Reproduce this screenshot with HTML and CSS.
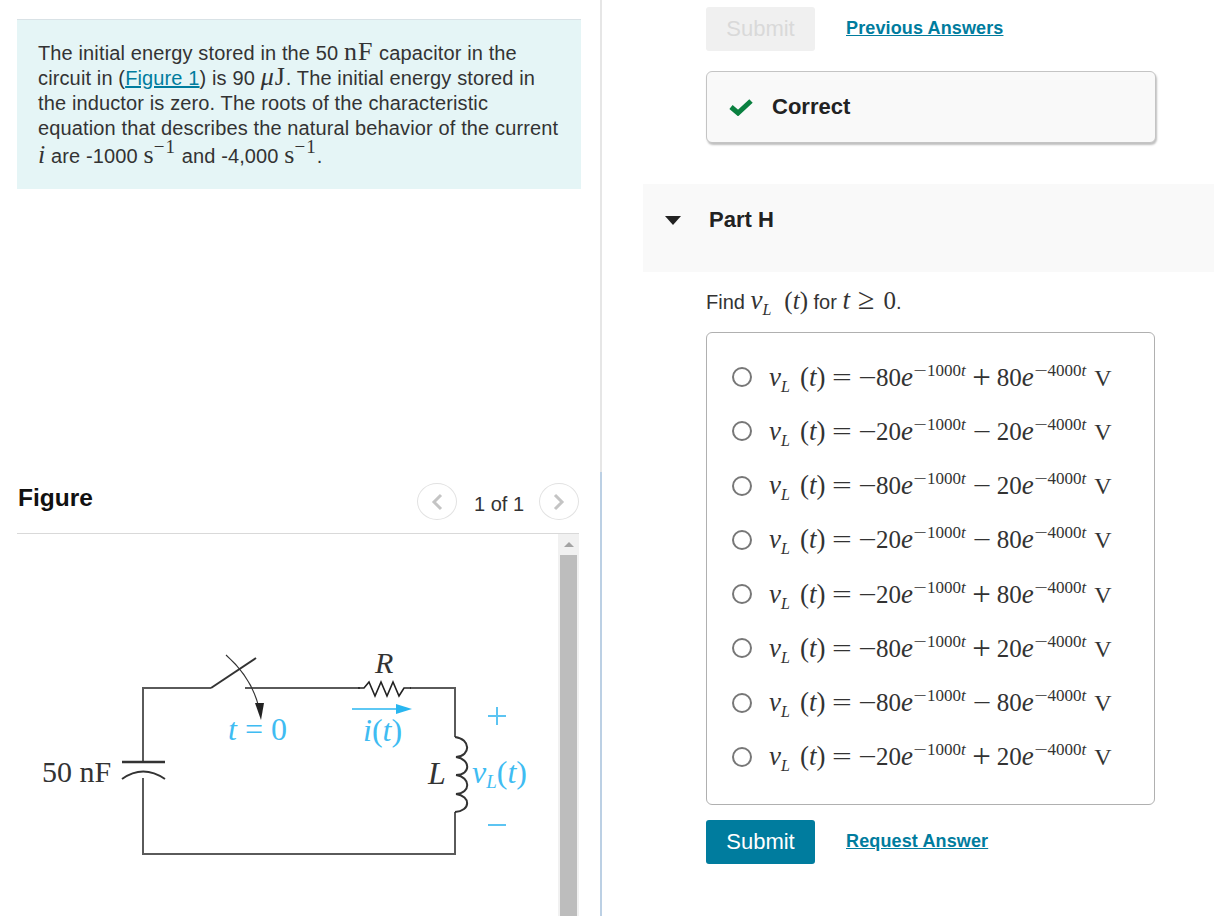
FILE: index.html
```html
<!DOCTYPE html>
<html lang="en">
<head>
    <meta charset="UTF-8">
    <title>Part H</title>
    <link rel="stylesheet" href="styles.css">
</head>
<body>
    <div class="page">
        <!-- left column -->
        <div class="left">
            <div class="intro">
                <p>The initial energy stored in the 50 <span class="m unit-wide">nF</span> capacitor in the circuit in (<a href="#">Figure 1</a>) is 90 <span class="m unit-wide"><i>μ</i>J</span>. The initial energy stored in the inductor is zero. The roots of the characteristic equation that describes the natural behavior of the current <span class="last-line"><span class="m"><i>i</i></span> are -1000 <span class="m">s<sup>−1</sup></span> and -4,000 <span class="m">s<sup>−1</sup></span>.</span></p>
            </div>

            <div class="figure-head">
                <h2>Figure</h2>
                <div class="pager">
                    <span class="pager-btn">
                        <svg width="12" height="18" viewBox="0 0 12 18"><path d="M10 2 L3 9 L10 16" fill="none" stroke="#c4c4c4" stroke-width="3"/></svg>
                    </span>
                    <span class="pager-text">1 of 1</span>
                    <span class="pager-btn">
                        <svg width="12" height="18" viewBox="0 0 12 18"><path d="M2 2 L9 9 L2 16" fill="none" stroke="#c4c4c4" stroke-width="3"/></svg>
                    </span>
                </div>
            </div>

            <div class="figure-body">
                <svg class="circuit" width="541" height="382" viewBox="17 534 541 382">
                    <g fill="none" stroke="#5a5a5a" stroke-width="2">
                        <path d="M143 778 V854 H455 V812"/>
                        <path d="M143 762 V688 H211"/>
                        <path d="M245 688 H360"/>
                        <path d="M410 688 H455 V737"/>
                    </g>
                    <path d="M211 688 L256 658" fill="none" stroke="#333" stroke-width="2"/>
                    <path d="M358 688 L364 688 L369 682 L375 696 L381 682 L387 696 L393 682 L399 696 L404 688 L411 688" fill="none" stroke="#222" stroke-width="1.6"/>
                    <path d="M226 655 Q252 678 259 708" fill="none" stroke="#333" stroke-width="1.2"/>
                    <path d="M255 703 L264 703 L261 720 Z" fill="#222"/>
                    <path d="M122 762 H165" stroke="#333" stroke-width="2.5"/>
                    <path d="M122 779 Q143 764 165 779" fill="none" stroke="#333" stroke-width="2"/>
                    <path d="M455 737 C471 739 471 756 456 757 C471 759 471 775 456 775 C471 777 471 793 456 794 C471 796 471 811 455 812" fill="none" stroke="#333" stroke-width="2"/>
                    <path d="M352 709 H396" stroke="#29b6f0" stroke-width="1.6"/>
                    <path d="M396 704 L412 709 L396 714 Z" fill="#29b6f0"/>
                    <path d="M497 707 V725 M488 716 H506 M488 825 H506" stroke="#5cc4f2" stroke-width="2"/>
                    <g class="fig-text">
                        <text x="42" y="782" font-size="30" class="dark">50 nF</text>
                        <text x="375" y="673" font-size="30" class="dark it">R</text>
                        <text x="428" y="784" font-size="32" class="dark it">L</text>
                        <text x="228" y="740" font-size="32" class="blue"><tspan class="it">t</tspan> = 0</text>
                        <text x="363" y="741" font-size="32" class="blue"><tspan class="it">i</tspan>(<tspan class="it">t</tspan>)</text>
                        <text x="472" y="783" font-size="32" class="blue"><tspan class="it">v</tspan><tspan class="it" font-size="19" dy="5">L</tspan><tspan dy="-5">(</tspan><tspan class="it">t</tspan>)</text>
                    </g>
                </svg>
                <div class="scrollbar">
                    <span class="scroll-up"></span>
                    <div class="scroll-thumb"></div>
                </div>
            </div>
        </div>

        <div class="divider"></div>

        <!-- right column -->
        <div class="right">
            <div class="actions top-actions">
                <button class="btn btn-off" type="button">Submit</button>
                <a class="link" href="#">Previous Answers</a>
            </div>

            <div class="correct">
                <svg width="24" height="18" viewBox="0 0 24 18"><path d="M2 9 L9 15 L22 3" fill="none" stroke="#0a8040" stroke-width="5"/></svg>
                <span>Correct</span>
            </div>

            <div class="part-head">
                <span class="caret"></span>
                <h3>Part H</h3>
            </div>

            <p class="question">Find <span class="m"><i class="var">v</i><sub><i>L</i></sub><span class="paren">(<i>t</i>)</span></span> for <span class="m"><i class="var">t</i><span class="geq">≥</span>0</span>.</p>

            <div class="answers">
                <label class="row"><input type="radio" name="a"><span class="eq"><i class="var">v</i><sub><i>L</i></sub><span class="paren">(<i>t</i>)</span><span class="equals">=</span><span class="minus">−</span>80<i class="e">e</i><sup><span class="sup-minus">−</span>1000<i>t</i></sup><span class="plus">+</span>80<i class="e">e</i><sup><span class="sup-minus">−</span>4000<i>t</i></sup><span class="volt">V</span></span></label>
                <label class="row"><input type="radio" name="a"><span class="eq"><i class="var">v</i><sub><i>L</i></sub><span class="paren">(<i>t</i>)</span><span class="equals">=</span><span class="minus">−</span>20<i class="e">e</i><sup><span class="sup-minus">−</span>1000<i>t</i></sup><span class="minus between">−</span>20<i class="e">e</i><sup><span class="sup-minus">−</span>4000<i>t</i></sup><span class="volt">V</span></span></label>
                <label class="row"><input type="radio" name="a"><span class="eq"><i class="var">v</i><sub><i>L</i></sub><span class="paren">(<i>t</i>)</span><span class="equals">=</span><span class="minus">−</span>80<i class="e">e</i><sup><span class="sup-minus">−</span>1000<i>t</i></sup><span class="minus between">−</span>20<i class="e">e</i><sup><span class="sup-minus">−</span>4000<i>t</i></sup><span class="volt">V</span></span></label>
                <label class="row"><input type="radio" name="a"><span class="eq"><i class="var">v</i><sub><i>L</i></sub><span class="paren">(<i>t</i>)</span><span class="equals">=</span><span class="minus">−</span>20<i class="e">e</i><sup><span class="sup-minus">−</span>1000<i>t</i></sup><span class="minus between">−</span>80<i class="e">e</i><sup><span class="sup-minus">−</span>4000<i>t</i></sup><span class="volt">V</span></span></label>
                <label class="row"><input type="radio" name="a"><span class="eq"><i class="var">v</i><sub><i>L</i></sub><span class="paren">(<i>t</i>)</span><span class="equals">=</span><span class="minus">−</span>20<i class="e">e</i><sup><span class="sup-minus">−</span>1000<i>t</i></sup><span class="plus">+</span>80<i class="e">e</i><sup><span class="sup-minus">−</span>4000<i>t</i></sup><span class="volt">V</span></span></label>
                <label class="row"><input type="radio" name="a"><span class="eq"><i class="var">v</i><sub><i>L</i></sub><span class="paren">(<i>t</i>)</span><span class="equals">=</span><span class="minus">−</span>80<i class="e">e</i><sup><span class="sup-minus">−</span>1000<i>t</i></sup><span class="plus">+</span>20<i class="e">e</i><sup><span class="sup-minus">−</span>4000<i>t</i></sup><span class="volt">V</span></span></label>
                <label class="row"><input type="radio" name="a"><span class="eq"><i class="var">v</i><sub><i>L</i></sub><span class="paren">(<i>t</i>)</span><span class="equals">=</span><span class="minus">−</span>80<i class="e">e</i><sup><span class="sup-minus">−</span>1000<i>t</i></sup><span class="minus between">−</span>80<i class="e">e</i><sup><span class="sup-minus">−</span>4000<i>t</i></sup><span class="volt">V</span></span></label>
                <label class="row"><input type="radio" name="a"><span class="eq"><i class="var">v</i><sub><i>L</i></sub><span class="paren">(<i>t</i>)</span><span class="equals">=</span><span class="minus">−</span>20<i class="e">e</i><sup><span class="sup-minus">−</span>1000<i>t</i></sup><span class="plus">+</span>20<i class="e">e</i><sup><span class="sup-minus">−</span>4000<i>t</i></sup><span class="volt">V</span></span></label>
            </div>

            <div class="actions">
                <button class="btn" type="button">Submit</button>
                <a class="link" href="#">Request Answer</a>
            </div>
        </div>
    </div>
</body>
</html>
```

FILE: styles.css
```css
html, body {
    height: 100%;
}

body {
    font-family: "Liberation Sans", Arial, sans-serif;
    margin: 0;
    padding: 0;
    color: #333;
    background: #fff;
    overflow: hidden;
}

.page {
    display: flex;
    height: 916px;
}

/* left column */
.left {
    width: 600px;
    box-sizing: border-box;
    padding: 19px 0 0 17px;
    display: flex;
    flex-direction: column;
    flex-shrink: 0;
}

.divider {
    width: 2px;
    flex-shrink: 0;
    background: linear-gradient(#e6e6e6 472px, #bcd0e4 472px);
}

.intro {
    background: #e5f5f6;
    border-top: 1px solid #d9e2e6;
    width: 564px;
    height: 170px;
    box-sizing: border-box;
    padding: 21px 21px 0;
}

.intro p {
    margin: 0;
    font-size: 20px;
    line-height: 25px;
    letter-spacing: 0.13px;
}

.intro a {
    color: #007c9e;
}

.m {
    font-family: "Liberation Serif", "DejaVu Serif", serif;
}

.intro .m {
    font-size: 26px;
    line-height: 0;
}

.intro .unit-wide {
    letter-spacing: 1px;
}

.last-line {
    display: inline-block;
    margin-top: 3px;
}

.intro sup {
    font-size: 19px;
    line-height: 0;
    letter-spacing: 1px;
}

.figure-head {
    display: flex;
    justify-content: space-between;
    align-items: flex-start;
    height: 50px;
    margin-top: 294px;
    border-bottom: 1px solid #d9d9d9;
    width: 562px;
    flex-shrink: 0;
}

.figure-head h2 {
    margin: 0;
    padding: 0 0 0 1px;
    font-size: 24.5px;
    line-height: 29px;
    color: #111;
}

.pager {
    display: flex;
    align-items: center;
    gap: 17px;
}

.pager-btn {
    width: 40px;
    height: 37px;
    border: 1px solid #e2e2e2;
    border-radius: 50%;
    box-sizing: border-box;
    display: flex;
    align-items: center;
    justify-content: center;
}

.pager-text {
    width: 48px;
    white-space: nowrap;
    font-size: 20px;
    margin-top: 6px;
}

.figure-body {
    display: flex;
    flex: 1;
    overflow: hidden;
    width: 562px;
}

.circuit {
    flex-shrink: 0;
    display: block;
}

.fig-text text {
    font-family: "Liberation Serif", serif;
}

.fig-text .dark {
    fill: #333;
}

.fig-text .blue {
    fill: #3fbcf2;
}

.fig-text .it {
    font-style: italic;
}

.scrollbar {
    width: 21px;
    background: #f1f1f1;
    flex-shrink: 0;
}

.scroll-up {
    display: block;
    width: 0;
    height: 0;
    margin: 8px auto 0;
    border-left: 5px solid transparent;
    border-right: 5px solid transparent;
    border-bottom: 5px solid #a3a3a3;
}

.scroll-thumb {
    height: 361px;
    margin: 8px 2px 0;
    background: #bdbdbd;
}

/* right column */
.right {
    flex: 1;
    padding-top: 7px;
    display: flex;
    flex-direction: column;
}

.actions {
    display: flex;
    align-items: center;
    margin-left: 104px;
}

.btn {
    width: 109px;
    height: 44px;
    border: none;
    border-radius: 3px;
    background: #007c9e;
    color: #fff;
    font-family: "Liberation Sans", Arial, sans-serif;
    font-size: 22px;
    padding: 0;
}

.btn-off {
    background: #f0f0f0;
    color: #d9d9d9;
}

.link {
    margin-left: 31px;
    margin-top: -2px;
    font-size: 18px;
    letter-spacing: 0.13px;
    font-weight: bold;
    color: #007c9e;
}

.correct {
    margin: 20px 0 0 104px;
    width: 450px;
    height: 72px;
    box-sizing: border-box;
    border: 1px solid #c4c4c4;
    border-radius: 6px;
    background: #f9f9f9;
    box-shadow: 1px 2px 2px rgba(0, 0, 0, 0.25);
    display: flex;
    align-items: center;
    padding-left: 22px;
}

.correct span {
    margin-left: 19px;
    font-size: 22px;
    font-weight: bold;
    color: #222;
}

.part-head {
    margin: 41px 0 0 41px;
    height: 88px;
    background: #f9f9f9;
    display: flex;
    align-items: flex-start;
    padding-left: 22px;
}

.part-head h3 {
    margin: 22px 0 0 28px;
    font-size: 22px;
    line-height: 27px;
    color: #222;
}

.caret {
    width: 0;
    height: 0;
    margin-top: 32px;
    border-left: 8px solid transparent;
    border-right: 8px solid transparent;
    border-top: 9px solid #222;
}

.question {
    margin: 17px 0 0 104px;
    font-size: 20px;
    line-height: 26px;
}

.question .m {
    font-size: 25px;
    line-height: 0;
}

.question sub {
    font-size: 16px;
    line-height: 0;
}

.question .paren {
    margin-left: 13px;
    font-size: 25px;
}

.geq {
    font-size: 30px;
    line-height: 0;
    margin: 0 9px 0 8px;
}

/* the math pieces get their own widths, the serif is narrower than the original math font */
.var {
    font-size: 27px;
}

.paren {
    margin-left: 10px;
    font-size: 27px;
}

.answers {
    margin: 17px 0 0 104px;
    width: 449px;
    height: 473px;
    box-sizing: border-box;
    border: 1px solid #b0b0b0;
    border-radius: 6px;
    padding: 17px 0 0 25px;
}

.row {
    display: flex;
    align-items: center;
    height: 54.25px;
}

.row input {
    width: 20px;
    height: 20px;
    margin: 0 17px 0 0;
    appearance: none;
    border: 2px solid #777;
    border-radius: 50%;
    background: #fff;
    box-sizing: border-box;
}

.eq {
    font-family: "Liberation Serif", "DejaVu Serif", serif;
    font-size: 25px;
    color: #333;
    white-space: nowrap;
}

.eq sub {
    font-size: 16px;
    line-height: 0;
}

.eq sup {
    font-size: 17px;
    line-height: 0;
    vertical-align: 10px;
}

.equals, .minus {
    display: inline-block;
    width: 17px;
    text-align: center;
}

.equals {
    width: 20px;
    margin: 0 7px 0 6.5px;
    transform: scaleX(1.4);
}

.minus {
    transform: scaleX(1.3);
}

.minus.between {
    width: 20px;
    margin: 0 5px 0 6px;
}

.plus {
    display: inline-block;
    width: 20px;
    margin: 0 5px 0 6px;
    text-align: center;
    font-size: 33px;
    line-height: 0;
    vertical-align: -2px;
}

.e {
    font-size: 27px;
    margin-right: 1px;
}

.sup-minus {
    display: inline-block;
    width: 12px;
    margin-right: 1px;
    text-align: center;
    transform: scaleX(1.4);
}

.volt {
    margin-left: 8px;
    font-size: 24px;
}

.answers + .actions {
    margin-top: 15px;
}
```
